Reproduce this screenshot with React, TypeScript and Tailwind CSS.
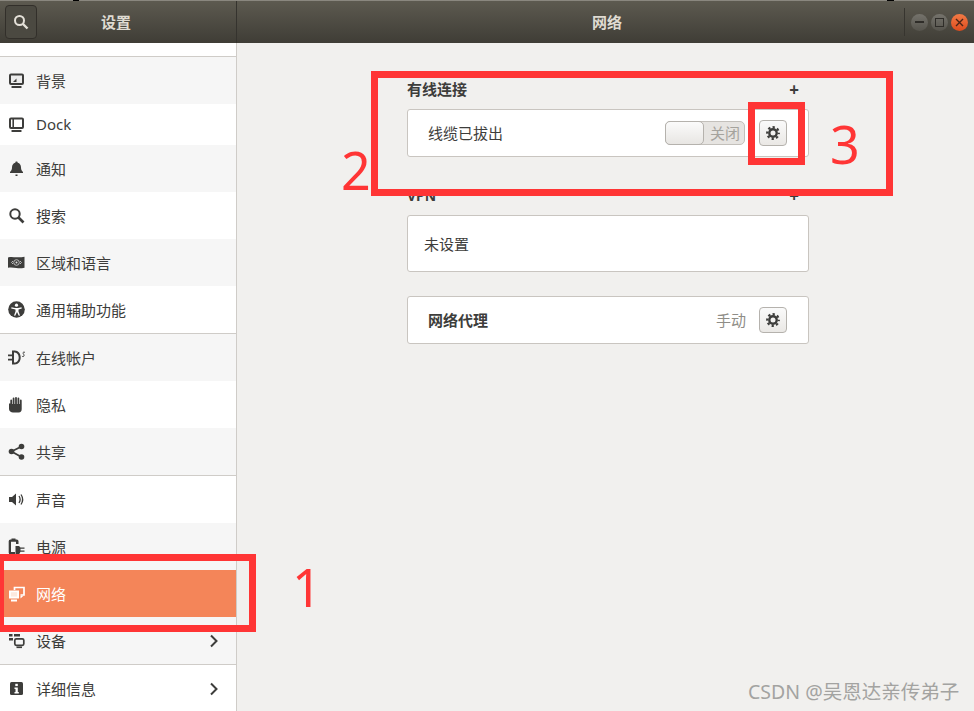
import React from "react";

const ink = "#3d3d3b";

const I = ({ children, color = ink }: { children: React.ReactNode; color?: string }) => (
  <svg width="18" height="18" viewBox="0 0 18 18" fill={color} className="block shrink-0">
    {children}
  </svg>
);

const icons: Record<string, (c: string) => React.ReactNode> = {
  bg: (c) => (
    <I color={c}>
      <path d="M3 1.500h11a2 2 0 0 1 2 2v7.500a2 2 0 0 1-2 2H3a2 2 0 0 1-2-2V3.500a2 2 0 0 1 2-2z" />
      <rect x="3" y="3.500" width="11" height="7.500" fill="#ececec" />
      <path d="M5 10l3.500-3.500V10z" />
      <rect x="3.500" y="14" width="10" height="2" rx="0.500" />
    </I>
  ),
  dock: (c) => (
    <I color={c}>
      <path fillRule="evenodd" d="M3 1.500h11a2 2 0 0 1 2 2v7.500a2 2 0 0 1-2 2H3a2 2 0 0 1-2-2V3.500a2 2 0 0 1 2-2zm3 2V11h8V3.500z" />
      <rect x="3" y="3.500" width="1.400" height="7.500" fill="#fff" />
      <rect x="3.500" y="14" width="10" height="2" rx="0.500" />
    </I>
  ),
  bell: (c) => (
    <I color={c}>
      <path d="M8.500 1.500c.8 0 1.200.6 1.200 1.200C11.800 3.200 13 5 13 7.500c0 2 .6 3.200 2 4.500v1H2v-1c1.400-1.300 2-2.500 2-4.500 0-2.500 1.200-4.300 3.300-4.800 0-.6.400-1.200 1.200-1.200z" />
      <rect x="7.500" y="14.500" width="2" height="1.500" />
    </I>
  ),
  search: (c) => (
    <svg width="18" height="18" viewBox="0 0 18 18" fill="none" stroke={c} className="block shrink-0">
      <circle cx="7" cy="7" r="4.700" strokeWidth="2" />
      <path d="M10.500 10.500l5 5" strokeWidth="2.600" />
    </svg>
  ),
  region: (c) => (
    <I color={c}>
      <path d="M0 3.500c3-1 5.500-.4 8.500-.2 3.300.2 5.500-.2 8-.6v11c-3 .6-5.500.6-8 .3-3-.3-5.500-.8-8.500-.2z" />
      <circle cx="8.500" cy="8.500" r="2.800" fill="none" stroke="#bbb" strokeWidth="1" />
      <circle cx="8.500" cy="8.500" r="1" fill="#ddd" />
      <path d="M3.500 8.500l1.500-1.500M3.500 8.500l1.500 1.500M13.500 8.500l-1.500-1.500M13.500 8.500l-1.500 1.500" stroke="#bbb" />
    </I>
  ),
  a11y: (c) => (
    <I color={c}>
      <circle cx="8.500" cy="8.500" r="8.300" />
      <circle cx="8.500" cy="4.200" r="1.600" fill="#fff" />
      <path d="M3.500 6.200l3.500.8h3l3.500-.8.300 1.200-3.300 1v2l1.500 4-1.200.4-1.800-3.800-1.800 3.800-1.200-.4 1.500-4v-2L3.200 7.400z" fill="#fff" />
    </I>
  ),
  online: (c) => (
    <svg width="18" height="18" viewBox="0 0 18 18" className="block shrink-0">
      <path d="M4 1.500h2.800c3.400 0 5.900 3 5.900 7s-2.500 7-5.900 7H4zM6 3.500v10h.8c2.200 0 3.900-2.200 3.900-5s-1.700-5-3.900-5z" fill={c} />
      <path d="M0 5.500h4.500v1.800H0zM0 9.700h4.500v1.800H0z" fill={c} />
      <path d="M17 3.500c-1-.8-2.300-.3-1.900.8.300.8 1.100 1.300.9 2.500-.2 1-1.500 1-2.100.3" fill="none" stroke={c} strokeWidth="1" />
    </svg>
  ),
  hand: (c) => (
    <I color={c}>
      <path d="M1 7.500h1.300V4.500a.9.900 0 0 1 1.800 0V8h.6V2.500a.9.900 0 0 1 1.800 0V8h.6V1.800a.9.900 0 0 1 1.800 0V8h.6V2.500a.9.900 0 0 1 1.800 0V8h.6V4.500a.9.900 0 0 1 1.800 0V13c0 2-1 3.500-3 3.500H5c-2 0-4-1.500-4-3.500z" />
    </I>
  ),
  share: (c) => (
    <svg width="18" height="18" viewBox="0 0 18 18" className="block shrink-0">
      <path d="M13.500 3.500L3.500 8.500l10 5.500" fill="none" stroke={c} strokeWidth="1.800" />
      <circle cx="13.500" cy="3.500" r="2.800" fill={c} />
      <circle cx="3.500" cy="8.500" r="2.800" fill={c} />
      <circle cx="13.500" cy="14" r="2.800" fill={c} />
    </svg>
  ),
  sound: (c) => (
    <svg width="18" height="18" viewBox="0 0 18 18" className="block shrink-0">
      <path d="M1 6h3l4-3.500v12L4 11H1z" fill={c} />
      <path d="M11 5c1.300 2 1.300 5 0 7M13 3.500c2 3 2 7 0 10" fill="none" stroke={c} strokeWidth="1.300" />
    </svg>
  ),
  power: (c) => (
    <svg width="18" height="18" viewBox="0 0 18 18" className="block shrink-0">
      <path d="M2.500 1.500h1V.5h4v1h1.200A1.800 1.800 0 0 1 10.500 3.300V6H8V3.800H3V14h4v2.500H2.500A1.800 1.800 0 0 1 .7 14.700V3.300A1.800 1.800 0 0 1 2.500 1.500z" fill={c} />
      <path d="M7.500 8h3.500l1.500 1.500H16.500v1.300h-4v1.700h4v1.300h-4L11 16.500H7.500z" fill={c} />
    </svg>
  ),
  net: (c) => (
    <svg width="18" height="18" viewBox="0 0 18 18" className="block shrink-0">
      <path d="M6.500 5V2.500h9.500v7.500h-3.500" fill="none" stroke={c} strokeWidth="1.700" />
      <path d="M12.500 13.500l3-2.800h-3z" fill={c} />
      <path d="M1 5.500h10v8H1z" fill={c} />
      <rect x="2.800" y="7.200" width="6.400" height="4.400" fill="#fde9df" />
      <rect x="3" y="14.500" width="6" height="2" fill={c} />
    </svg>
  ),
  device: (c) => (
    <svg width="18" height="18" viewBox="0 0 18 18" className="block shrink-0">
      <rect x="1" y="2" width="3.500" height="2.500" fill={c} />
      <rect x="6" y="2" width="6" height="2.500" fill={c} />
      <rect x="1" y="6" width="4" height="2.500" fill={c} />
      <rect x="6.800" y="6.800" width="9" height="6.500" rx="1.500" fill="none" stroke={c} strokeWidth="1.700" />
      <rect x="8.500" y="14.500" width="5.500" height="1.600" fill={c} />
    </svg>
  ),
  info: (c) => (
    <svg width="18" height="18" viewBox="0 0 18 18" className="block shrink-0">
      <rect x="2" y="2" width="13" height="13" rx="1.500" fill={c} />
      <rect x="7.300" y="3.800" width="2.500" height="2.300" fill="#fff" />
      <path d="M6.500 7.500h3.300v4.500h1v1.500H6.500V12h1V9h-1z" fill="#fff" />
    </svg>
  ),
};

const Chevron = () => (
  <svg width="10" height="14" viewBox="0 0 10 14" fill="none" stroke="#3d3d3b" strokeWidth="2" className="block">
    <path d="M2 1.500l5.500 5.500L2 12.500" />
  </svg>
);

type Row = { label: string; icon: string; bg: string; h: string; sel?: boolean; arrow?: boolean; border?: boolean };

const rows: Row[] = [
  { label: "背景", icon: "bg", bg: "bg-[#f6f6f6]", h: "h-[47px]" },
  { label: "Dock", icon: "dock", bg: "bg-white", h: "h-[41px]" },
  { label: "通知", icon: "bell", bg: "bg-[#f6f6f6]", h: "h-[47px]" },
  { label: "搜索", icon: "search", bg: "bg-white", h: "h-[47px]" },
  { label: "区域和语言", icon: "region", bg: "bg-[#f6f6f6]", h: "h-[47px]" },
  { label: "通用辅助功能", icon: "a11y", bg: "bg-white", h: "h-[47px]", border: true },
  { label: "在线帐户", icon: "online", bg: "bg-[#f6f6f6]", h: "h-[47px]" },
  { label: "隐私", icon: "hand", bg: "bg-white", h: "h-[47px]" },
  { label: "共享", icon: "share", bg: "bg-[#f6f6f6]", h: "h-[47px]", border: true },
  { label: "声音", icon: "sound", bg: "bg-white", h: "h-[47px]" },
  { label: "电源", icon: "power", bg: "bg-[#f6f6f6]", h: "h-[47px]" },
  { label: "网络", icon: "net", bg: "bg-[#f48559]", h: "h-[47px]", sel: true },
  { label: "设备", icon: "device", bg: "bg-[#f6f6f6]", h: "h-[47px]", arrow: true, border: true },
  { label: "详细信息", icon: "info", bg: "bg-white", h: "h-[47px]", arrow: true },
];

const Gear = () => (
  <svg width="16" height="16" viewBox="0 0 16 16" fill="none" stroke="#3d3d3b" className="block">
    <circle cx="8" cy="8" r="3.700" strokeWidth="2.400" />
    <circle cx="8" cy="8" r="5.800" strokeWidth="2.200" strokeDasharray="2.300 2.250" strokeDashoffset="1.100" />
  </svg>
);

const GearButton = () => (
  <div className="flex h-[26px] w-[28px] items-center justify-center rounded-[4px] border border-[#b5b2ad] bg-gradient-to-b from-[#fafafa] to-[#eae8e5]">
    <Gear />
  </div>
);

const WinBtn = ({ children, cls }: { children: React.ReactNode; cls: string }) => (
  <div className={`flex h-[17px] w-[17px] items-center justify-center rounded-full ${cls}`}>{children}</div>
);

export default function App() {
  return (
    <div
      className="relative h-[711px] w-[974px] overflow-hidden bg-[#f1f0ee] text-[15px] text-[#3d3d3b]"
      style={{ fontFamily: '"Noto Sans", "Noto Sans CJK SC", sans-serif' }}
    >
      {/* title bar */}
      <div className="flex h-[43px] items-stretch border-t border-[#8a877f] bg-gradient-to-b from-[#5d5a50] to-[#3f3d36]">
        <div className="flex w-[237px] items-center border-r border-[#35332e]">
          <div className="ml-[5px] flex h-[34px] w-[32px] items-center justify-center rounded-[4px] border border-[#322f2a] bg-[#4b4941]">
            <svg width="16" height="16" viewBox="0 0 16 16" fill="none" stroke="#e4e0d8">
              <circle cx="6.500" cy="6.500" r="4.500" strokeWidth="2" />
              <path d="M10 10l4.500 4.500" strokeWidth="2.400" />
            </svg>
          </div>
          <span className="ml-[64px] text-[15px] font-bold text-[#dfdbd2]">设置</span>
        </div>
        <div className="flex flex-1 items-center">
          <span className="ml-[355px] text-[15px] font-bold text-[#dfdbd2]">网络</span>
          <div className="ml-auto flex h-full items-center">
            <div className="mr-[6px] h-[28px] w-px bg-[#37352f]" />
            <div className="mr-[6px] flex items-center gap-[3px]">
              <WinBtn cls="bg-gradient-to-b from-[#75736c] to-[#55534c]">
                <div className="h-[2px] w-[9px] bg-[#2f2d29]" />
              </WinBtn>
              <WinBtn cls="bg-gradient-to-b from-[#75736c] to-[#55534c]">
                <div className="h-[9px] w-[9px] border border-[#2f2d29]" />
              </WinBtn>
              <WinBtn cls="bg-gradient-to-b from-[#f27a45] to-[#dc4a1c]">
                <svg width="9" height="9" viewBox="0 0 9 9" stroke="#4a2416" strokeWidth="1.400">
                  <path d="M1 1l7 7M8 1l-7 7" />
                </svg>
              </WinBtn>
            </div>
          </div>
        </div>
      </div>

      <div className="flex h-[668px]">
        {/* sidebar */}
        <aside className="h-full w-[237px] shrink-0 overflow-hidden border-r border-[#cfccc8] bg-white">
          <div className="h-[14px] border-b border-[#cfccc8] bg-white" />
          {rows.map((r) => (
            <div
              key={r.label}
              className={`flex items-center pl-[8px] pr-[17px] ${r.h} ${r.bg} ${r.border ? "box-content border-b border-[#cfccc8]" : ""} ${r.sel ? "text-white" : ""}`}
            >
              {icons[r.icon](r.sel ? "#ffffff" : ink)}
              <span className={`ml-[10px] flex-1 ${r.label === "Dock" ? "" : "pt-[2px]"}`}>{r.label}</span>
              {r.arrow && <Chevron />}
            </div>
          ))}
        </aside>

        {/* main */}
        <main className="ml-[170px] w-[402px] shrink-0">
          <div className="mt-[34px] flex h-[24px] items-center justify-between">
            <span className="text-[15px] font-bold">有线连接</span>
            <span className="mr-[10px] text-[17px] font-bold leading-none">+</span>
          </div>
          <div className="mt-[8px] flex h-[48px] items-center rounded-[3px] border border-[#c9c5c0] bg-white pl-[20px] pr-[21px]">
            <span className="flex-1">线缆已拔出</span>
            <div className="flex h-[24px] w-[80px] items-center rounded-[5px] border border-[#c3c0bb] bg-[#e6e4e1]">
              <div className="-ml-px h-[24px] w-[39px] rounded-[5px] border border-[#b5b2ad] bg-gradient-to-b from-[#fbfbfb] to-[#e8e6e3]" />
              <span className="ml-[6px] text-[15px] text-[#a5a39d]">关闭</span>
            </div>
            <div className="ml-[14px]">
              <GearButton />
            </div>
          </div>

          <div className="mt-[26px] flex h-[24px] items-center justify-between">
            <span className="text-[14px] font-bold">VPN</span>
            <span className="mr-[10px] text-[17px] font-bold leading-none">+</span>
          </div>
          <div className="mt-[8px] flex h-[57px] items-center rounded-[3px] border border-[#c9c5c0] bg-white pl-[16px] pt-[2px] text-[15px]">
            未设置
          </div>

          <div className="mt-[24px] flex h-[48px] items-center rounded-[3px] border border-[#c9c5c0] bg-white pl-[20px] pr-[21px]">
            <span className="flex-1 font-bold">网络代理</span>
            <span className="text-[#8f8d87]">手动</span>
            <div className="ml-[13px]">
              <GearButton />
            </div>
          </div>
        </main>
      </div>

      {/* annotations over the screenshot */}
      <div className="absolute left-[73px] top-0 h-[1px] w-[6px] bg-black" />
      <div className="absolute left-[887px] top-0 h-[1px] w-[7px] bg-black" />
      <div className="absolute left-[-3px] top-[554px] h-[78px] w-[259px] border-[7px] border-[#ff3535]" />
      <div className="absolute left-[371px] top-[71px] h-[125px] w-[522px] border-[7px] border-[#ff3535]" />
      <div className="absolute left-[748px] top-[102px] h-[63px] w-[57px] border-[7px] border-[#ff3535]" />
      <span className="absolute left-[292px] top-[552px] text-[52px] leading-[70px] text-[#ff3535]">1</span>
      <span className="absolute left-[341px] top-[135px] text-[52px] leading-[70px] text-[#ff3535]">2</span>
      <span className="absolute left-[830px] top-[109px] text-[52px] leading-[70px] text-[#ff3535]">3</span>
      <span className="absolute left-[748px] top-[680px] text-[19.5px] leading-[24px] text-[#a3a3a1]">CSDN @吴恩达亲传弟子</span>
    </div>
  );
}
